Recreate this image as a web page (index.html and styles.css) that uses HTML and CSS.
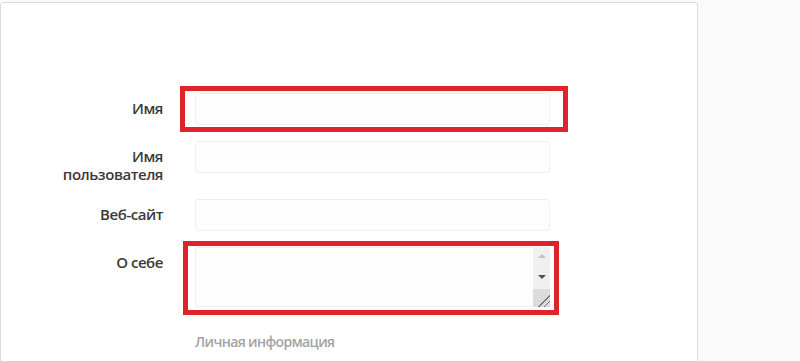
FILE: index.html
```html
<!DOCTYPE html>
<html lang="ru">

<head>
    <meta charset="UTF-8">
    <meta name="viewport" content="width=device-width, initial-scale=1.0">
    <title>Редактировать профиль</title>
    <link rel="stylesheet" href="styles.css">
</head>

<body>
    <div class="card">
        <form class="edit-form">
            <!-- Имя -->
            <div class="form-row">
                <aside class="label-col"><label for="name">Имя</label></aside>
                <div class="field">
                    <input class="text-input" id="name" type="text">
                    <span class="mark mark-name"></span>
                </div>
            </div>
            <!-- Имя пользователя -->
            <div class="form-row">
                <aside class="label-col"><label for="username">Имя пользователя</label></aside>
                <div class="field">
                    <input class="text-input" id="username" type="text">
                </div>
            </div>
            <!-- Веб-сайт -->
            <div class="form-row">
                <aside class="label-col"><label for="site">Веб-сайт</label></aside>
                <div class="field">
                    <input class="text-input" id="site" type="text">
                </div>
            </div>
            <!-- О себе -->
            <div class="form-row">
                <aside class="label-col"><label for="bio">О себе</label></aside>
                <div class="field">
                    <div class="textarea-box">
                        <textarea class="bio" id="bio"></textarea>
                        <div class="scrollbar">
                            <span class="arrow arrow-up"></span>
                            <span class="arrow arrow-down"></span>
                            <span class="resizer"></span>
                        </div>
                    </div>
                    <span class="mark mark-bio"></span>
                </div>
            </div>
            <!-- Личная информация -->
            <div class="form-row">
                <aside class="label-col"></aside>
                <div class="field">
                    <div class="section-title">Личная информация</div>
                </div>
            </div>
        </form>
    </div>
</body>

</html>
```

FILE: styles.css
```css
* {
    margin: 0;
    padding: 0;
    box-sizing: border-box;
}

body {
    font-family: "Open Sans", "Noto Sans", Arial, sans-serif;
    color: #262626;
    background-color: #fafafa;
    padding-top: 2px;
    overflow: hidden;
}

.card {
    width: 698px;
    min-height: 420px;
    background-color: #fff;
    border: 1px solid #dbdbdb;
    border-radius: 3px;
}

.edit-form {
    padding-top: 90px;
}

.form-row {
    display: flex;
    margin-bottom: 16px;
}

.label-col {
    flex: 0 0 194px;
    padding: 0 32px;
    text-align: right;
}

.label-col label {
    display: block;
    padding-top: 6px;
    font-size: 15px;
    font-weight: 600;
    letter-spacing: -0.45px;
    line-height: 18px;
    color: #3a3a3a;
}

.field {
    flex: 0 1 355px;
    position: relative;
}

.text-input {
    display: block;
    width: 100%;
    height: 32px;
    padding: 0 10px;
    font-size: 16px;
    background-color: #fdfdfd;
    border: 1px solid #efefef;
    border-radius: 3px;
    outline: none;
}

/* О себе */
.textarea-box {
    display: flex;
    height: 60px;
    background-color: #fdfdfd;
    border: 1px solid #efefef;
    border-right: 0;
    border-radius: 3px;
}

.bio {
    flex: 1;
    border: 0;
    resize: none;
    outline: none;
    background-color: transparent;
    padding: 6px 10px;
    font-family: inherit;
    font-size: 16px;
}

.scrollbar {
    flex: 0 0 17px;
    margin: -1px 0;
    display: flex;
    flex-direction: column;
    align-items: center;
    background-color: #f0f0f0;
}

.arrow {
    width: 0;
    height: 0;
    border-left: 4px solid transparent;
    border-right: 4px solid transparent;
}

.arrow-up {
    margin-top: 7px;
    border-bottom: 4px solid #c2c2c2;
}

.arrow-down {
    margin-top: 17px;
    border-top: 4px solid #505050;
}

.resizer {
    margin-top: auto;
    width: 17px;
    height: 18px;
    background-color: #dcdcdc;
    background-image: linear-gradient(135deg, transparent 16px, #777 16px, #777 17px, transparent 17px, transparent 20px, #777 20px, #777 21px, transparent 21px);
}

.section-title {
    margin-top: 10px;
    font-size: 14px;
    font-weight: 600;
    letter-spacing: -0.6px;
    line-height: 18px;
    color: #a3a3a3;
}

/* красные рамки-выделения */
.mark {
    position: absolute;
    border: 5px solid #e0222a;
    pointer-events: none;
}

.mark-name {
    top: -7px;
    bottom: -7px;
    left: -15px;
    right: -18px;
}

.mark-bio {
    top: -6px;
    bottom: -8px;
    left: -12px;
    right: -9px;
}
```
